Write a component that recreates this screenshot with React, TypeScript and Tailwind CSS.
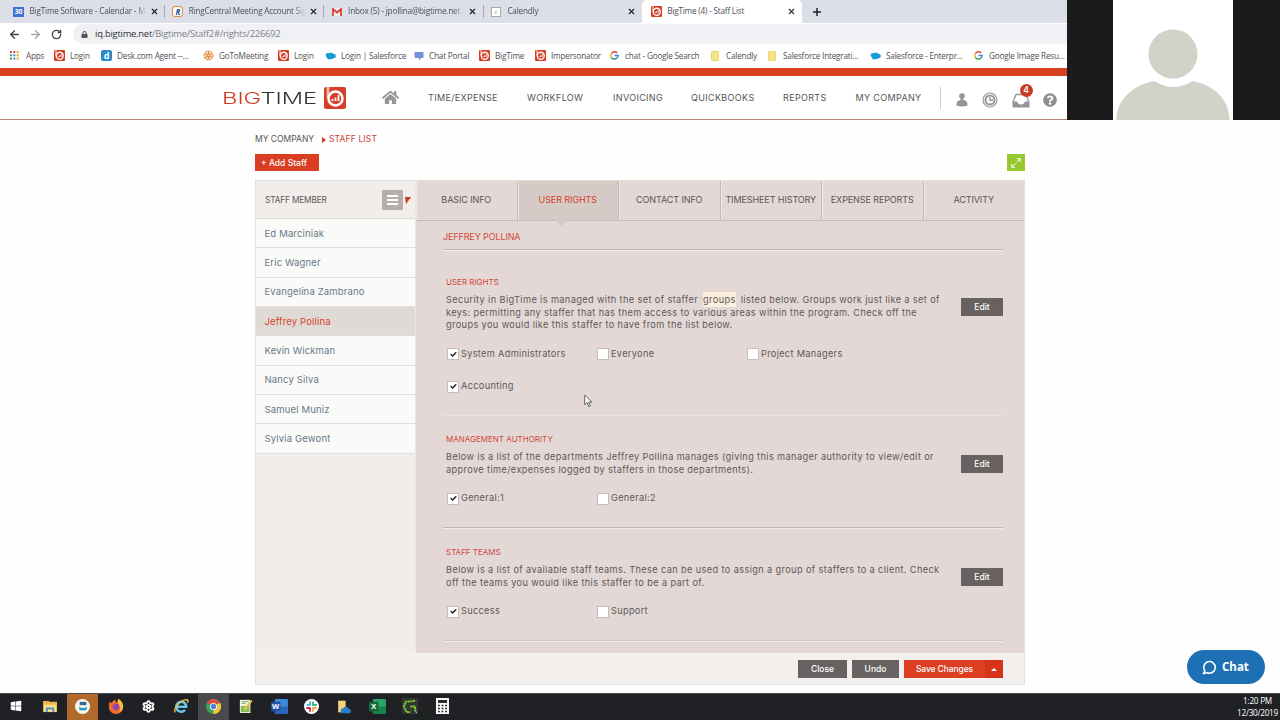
import type { ReactNode } from "react";
import { FaHome, FaQuestionCircle, FaLock, FaWindows } from "react-icons/fa";
import { ArrowLeft, ArrowRight, RotateCw, X, Plus, Settings, Check } from "lucide-react";

const BigTimeIcon = ({ className = "w-[11px] h-[11px]" }: { className?: string }) => (
  <svg viewBox="0 0 22 22" className={className}>
    <rect width="22" height="22" rx="2" fill="#d63f27" />
    <path d="M4 0v11" stroke="#f0b3a6" strokeWidth="3" />
    <circle cx="11.5" cy="11.5" r="7" fill="none" stroke="#fff" strokeWidth="2.6" />
    <path d="M8.5 14v-2M11.5 14V10.500M14.500 14V8" stroke="#fff" strokeWidth="1.8" />
  </svg>
);

const GoogleIcon = () => (
  <svg viewBox="0 0 20 20" className="w-[9px] h-[9px]" fill="none" strokeWidth="3.4">
    <path d="M16 4.500A8 8 0 0 0 3 6" stroke="#e2483b" />
    <path d="M3 6a8 8 0 0 0 0 8" stroke="#f0b81c" />
    <path d="M3 14a8 8 0 0 0 12 2" stroke="#36a455" />
    <path d="M10 10h8a8 8 0 0 1-3 6" stroke="#4583ee" />
  </svg>
);

const CloudIcon = () => (
  <svg viewBox="0 0 24 18" className="w-[11px] h-[8px]" fill="#169bd7">
    <circle cx="6" cy="7" r="5" />
    <circle cx="13" cy="6" r="5" />
    <circle cx="19" cy="9" r="5" />
    <circle cx="9" cy="12" r="5" />
    <circle cx="14" cy="11" r="5" />
  </svg>
);

const FolderIcon = () => <div className="h-[10px] w-[8px] rounded-[1px] border border-[#ecd671] bg-[#f8e48c]" />;

const CalendarIcon = () => (
  <div className="flex h-[10px] w-[11px] items-center justify-center bg-[#3f74d3] text-[7px] leading-none font-bold tracking-[-0.3px] text-white">
    30
  </div>
);

const RingIcon = () => (
  <div className="flex h-[11px] w-[11px] items-center justify-center rounded-[3px] border-[1.5px] border-[#e8882c] bg-white text-[8px] leading-none font-bold text-[#20508f] italic">
    R
  </div>
);

const GmailIcon = () => (
  <svg viewBox="0 0 20 16" className="h-[8px] w-[10px]">
    <rect width="20" height="16" fill="#f3eeee" />
    <path d="M2 16V2l8 7 8-7v14" fill="none" stroke="#d5392f" strokeWidth="3.400" />
  </svg>
);

const CalendlyIcon = () => (
  <div className="flex h-[10px] w-[10px] items-center justify-center border border-[#a9a9a9] bg-white text-[6px] leading-none text-[#777]">
    c
  </div>
);

const DeskIcon = () => (
  <div className="flex h-[11px] w-[11px] items-center justify-center rounded-[2px] bg-[#2b8ac9] text-[9px] leading-none font-bold text-white">
    d
  </div>
);

const GoToIcon = () => (
  <svg viewBox="0 0 22 22" className="h-[11px] w-[11px]" stroke="#dd7f2b" strokeWidth="2">
    <circle cx="11" cy="11" r="9" fill="#f6d3ad" strokeDasharray="5 1.500" />
    <path d="M11 4v14M5 7.500l12 7M17 7.500l-12 7" />
    <circle cx="11" cy="11" r="2" fill="#fff" />
  </svg>
);

const ChatPortalIcon = () => (
  <svg viewBox="0 0 20 20" className="h-[10px] w-[10px]" fill="#7191dc">
    <path d="M3 2h14q2 0 2 2v8q0 2-2 2h-3l-4 5v-5H3q-2 0-2-2V4q0-2 2-2z" />
  </svg>
);

const AppsIcon = () => (
  <svg viewBox="0 0 9 9" className="h-[9px] w-[9px]">
    {["#d9483b", "#d9483b", "#e0a437", "#4a9c5b", "#4d7dd1", "#e0a437", "#4a9c5b", "#4d7dd1", "#e0a437"].map((c, i) => (
      <rect key={i} x={(i % 3) * 3.3} y={Math.floor(i / 3) * 3.3} width="2" height="2" fill={c} />
    ))}
  </svg>
);

const browserTabs = [
  { title: "BigTime Software - Calendar - M", icon: <CalendarIcon /> },
  { title: "RingCentral Meeting Account Sig", icon: <RingIcon /> },
  { title: "Inbox (5) - jpollina@bigtime.net", icon: <GmailIcon /> },
  { title: "Calendly", icon: <CalendlyIcon /> },
];

// each width runs up to the next bookmark's icon
const bookmarks: { label: string; icon: ReactNode; width: string; text: string }[] = [
  { label: "Apps", icon: <AppsIcon />, width: "w-[44px]", text: "pl-[7px]" },
  { label: "Login", icon: <BigTimeIcon />, width: "w-[47px]", text: "pl-[5px]" },
  { label: "Desk.com Agent --...", icon: <DeskIcon />, width: "w-[102px]", text: "pl-[5px]" },
  { label: "GoToMeeting", icon: <GoToIcon />, width: "w-[75px]", text: "pl-[5px]" },
  { label: "Login", icon: <BigTimeIcon />, width: "w-[47px]", text: "pl-[5px]" },
  { label: "Login | Salesforce", icon: <CloudIcon />, width: "w-[89px]", text: "pl-[5px]" },
  { label: "Chat Portal", icon: <ChatPortalIcon />, width: "w-[65px]", text: "pl-[5px]" },
  { label: "BigTime", icon: <BigTimeIcon />, width: "w-[56px]", text: "pl-[5px]" },
  { label: "Impersonator", icon: <BigTimeIcon />, width: "w-[75px]", text: "pl-[5px]" },
  { label: "chat - Google Search", icon: <GoogleIcon />, width: "w-[101px]", text: "pl-[6px]" },
  { label: "Calendly", icon: <FolderIcon />, width: "w-[57px]", text: "pl-[7px]" },
  { label: "Salesforce Integrati...", icon: <FolderIcon />, width: "w-[102px]", text: "pl-[7px]" },
  { label: "Salesforce - Enterpr...", icon: <CloudIcon />, width: "w-[104px]", text: "pl-[5px]" },
  { label: "Google Image Resu...", icon: <GoogleIcon />, width: "w-[92px]", text: "pl-[6px]" },
];

const navItems = [
  { label: "TIME/EXPENSE", width: "w-[99px]" },
  { label: "WORKFLOW", width: "w-[86px]" },
  { label: "INVOICING", width: "w-[78px]" },
  { label: "QUICKBOOKS", width: "w-[92px]" },
  { label: "REPORTS", width: "w-[72.500px]" },
  { label: "MY COMPANY", width: "w-[84px]" },
];

const staff = [
  "Ed Marciniak",
  "Eric Wagner",
  "Evangelina Zambrano",
  "Jeffrey Pollina",
  "Kevin Wickman",
  "Nancy Silva",
  "Samuel Muniz",
  "Sylvia Gewont",
];

const panelTabs = ["BASIC INFO", "USER RIGHTS", "CONTACT INFO", "TIMESHEET HISTORY", "EXPENSE REPORTS", "ACTIVITY"];

const BrowserChrome = () => (
  <div className="font-['Open_Sans','Noto_Sans',sans-serif] text-[8.200px] tracking-[-0.2px] text-[#4d5056]">
    <div className="flex h-[23px] items-center bg-[#dcdfe8] pl-[6px]">
      {browserTabs.map((tab, i) => (
        <div key={tab.title} className="flex h-full w-[159.300px] items-center pl-[7px]">
          <div className="flex w-[16.500px] items-center">{tab.icon}</div>
          <div className="w-[117px] whitespace-nowrap [mask-image:linear-gradient(to_right,black_90%,transparent)]">
            {tab.title}
          </div>
          <X className="ml-[3px] h-[9px] w-[9px] text-[#222]" strokeWidth={3} />
          {i < 3 && <div className="ml-[5.500px] h-[13px] w-px bg-[#a4a7ae]" />}
        </div>
      ))}
      <div className="-ml-px flex h-full w-[160px] items-center rounded-t-[5px] bg-white pl-[9px]">
        <BigTimeIcon />
        <div className="w-[120px] pl-[5px]">BigTime (4) - Staff List</div>
        <X className="ml-[5px] h-[9px] w-[9px] text-[#333]" strokeWidth={3} />
      </div>
      <Plus className="ml-[9px] h-[12px] w-[12px] text-[#222]" strokeWidth={3} />
    </div>
    <div className="flex h-[21px] items-center bg-white pt-px pl-[8px]">
      <ArrowLeft className="h-[13px] w-[13px] text-[#444]" strokeWidth={2.5} />
      <ArrowRight className="ml-[8px] h-[13px] w-[13px] text-[#a5a5a5]" strokeWidth={2.5} />
      <RotateCw className="ml-[9px] h-[11px] w-[11px] text-[#444]" strokeWidth={3} />
      <div className="ml-[11px] flex h-[20px] flex-1 items-center rounded-l-[10px] bg-[#f0f1f4] pl-[8px]">
        <FaLock className="h-[7px] w-[7px] text-[#555]" />
        <div className="pl-[7px] text-[9.400px] tracking-[-0.23px] whitespace-nowrap text-[#7e8187]">
          <span className="text-[#333]">iq.bigtime.net</span>/Bigtime/Staff2#/rights/226692
        </div>
      </div>
    </div>
    <div className="flex h-[24px] items-center overflow-hidden bg-white pl-[10px]">
      {bookmarks.map((b, i) => (
        <div key={i} className={`flex shrink-0 items-center whitespace-nowrap ${b.width}`}>
          <div className="shrink-0">{b.icon}</div>
          <div className={b.text}>{b.label}</div>
        </div>
      ))}
    </div>
  </div>
);

const NavBar = () => (
  <div className="flex h-[52px] items-center border-t-8 border-b border-t-[#d83d22] border-b-[#b98375] bg-white pl-[222px]">
    <div className="w-[102px] pt-px text-[#333]">
      <div className="w-[68px] origin-left scale-x-[1.48] text-[16px] leading-none font-light whitespace-nowrap">
        <span className="text-[#d13b22]">BIG</span>TIME
      </div>
    </div>
    <BigTimeIcon className="h-[22px] w-[22px]" />
    <FaHome className="ml-[36px] h-[17px] w-[17px] text-[#969696]" />
    <div className="ml-[29px] flex pt-px text-[9px] tracking-[0.35px] whitespace-nowrap text-[#555]">
      {navItems.map((item) => (
        <div key={item.label} className={item.width}>
          {item.label}
        </div>
      ))}
    </div>
    <div className="h-[22px] w-px bg-[#ccc]" />
    <svg viewBox="0 0 12 14" className="mt-[5px] ml-[15px] h-[14px] w-[12px]" fill="#969696">
      <circle cx="6" cy="3" r="2.800" />
      <path d="M4.500 5h3v2C11 7.500 11.500 9.500 11.500 12.500q-5.500 1.800-11 0C.5 9.500 1 7.500 4.500 7z" />
    </svg>
    <svg viewBox="0 0 16 16" className="mt-[4px] ml-[14px] h-[16px] w-[16px]" fill="none" stroke="#969696">
      <circle cx="8" cy="8" r="7" strokeWidth="1.200" />
      <circle cx="8" cy="8" r="4.500" strokeWidth="2" />
      <path d="M8 5v3.300h3" strokeWidth="1.400" />
    </svg>
    <div className="relative mt-[5px] ml-[14px]">
      <svg viewBox="0 0 18 15" className="h-[15px] w-[18px]" fill="none" stroke="#969696">
        <path d="M1 9 4 1.500h10L17 9" strokeWidth="1.300" />
        <path d="M.5 8.500h4.500q1 3 4 3t4-3h4.500v6h-17z" fill="#969696" stroke="none" />
      </svg>
      <div className="absolute -top-[9px] left-[8px] flex h-[13px] w-[13px] items-center justify-center rounded-full bg-[#cb3a26] text-[8.500px] font-semibold text-white">
        4
      </div>
    </div>
    <FaQuestionCircle className="mt-[4px] ml-[13px] h-[14px] w-[14px] text-[#8e8e8e]" />
  </div>
);

const CallerPanel = () => (
  <div className="h-[120px] w-[213px] bg-[#1b1b1b] pl-[46px]">
    <svg viewBox="0 0 120 120" className="h-[120px] w-[120px] bg-white" fill="#d1d2c8">
      <circle cx="60" cy="54" r="24.500" />
      <path d="M3.500 120c0-21 17-35 38-39q19 12 38 0c21 4 37 18 37 39z" />
    </svg>
  </div>
);

const StaffSidebar = () => (
  <div className="w-[160px] border-r border-[#ece6e4] bg-[#f0edeb]">
    <div className="flex h-[38px] items-center border-b border-[#dedbd8] pl-[9px]">
      <div className="w-[117px] pt-px text-[8.300px] tracking-[-0.15px] text-[#5a5a5a]">STAFF MEMBER</div>
      <div className="flex h-[20px] w-[21px] flex-col items-center justify-center gap-[2px] bg-[#b5aeab]">
        <div className="h-[2px] w-[11px] bg-white" />
        <div className="h-[2px] w-[11px] bg-white" />
        <div className="h-[2px] w-[11px] bg-white" />
      </div>
      <svg viewBox="0 0 6 7" className="mt-[2px] ml-[2px] h-[7px] w-[6px]">
        <path d="M0 0h6L1 7z" fill="#cf3620" />
      </svg>
    </div>
    {staff.map((name) => (
      <div
        key={name}
        className={`flex h-[29.350px] items-center border-b border-[#dfdfdd] pt-px pl-[8.500px] text-[9.500px] tracking-[0.150px] ${
          name === "Jeffrey Pollina" ? "bg-[#e0dad6] text-[#d8432d]" : "bg-[#fafaf9] text-[#687988]"
        }`}
      >
        {name}
      </div>
    ))}
  </div>
);

const CheckItem = ({ label, checked = false }: { label: string; checked?: boolean }) => (
  <div className="flex h-[13px] w-[150px] items-center pl-px">
    <div className="mt-[2px] flex h-[12px] w-[12px] items-center justify-center border border-[#c6bcba] bg-white">
      {checked && <Check className="h-[7px] w-[7px] text-[#222]" strokeWidth={5} />}
    </div>
    <div className="pt-px pl-[2px] text-[9.200px] tracking-[0.320px] text-[#5f5957]">{label}</div>
  </div>
);

interface SectionProps {
  title: string;
  lines: ReactNode[];
  className: string;
  children: ReactNode;
}

const Section = ({ title, lines, className, children }: SectionProps) => (
  <div className={`border-b pl-[3px] ${className}`}>
    <div className="h-[12px] text-[8px] leading-[12px] text-[#d24936]">{title}</div>
    <div className="flex justify-between">
      <div className="pt-[6px] text-[9.200px] leading-[12.600px] tracking-[0.380px] whitespace-nowrap text-[#5f5957]">
        {lines.map((line, i) => (
          <div key={i}>{line}</div>
        ))}
      </div>
      <button className="mt-[10px] h-[18px] w-[42px] bg-[#676261] text-[8.500px] font-medium text-white">Edit</button>
    </div>
    {children}
  </div>
);

const UserRights = () => (
  <div className="h-[432px] px-[27px] pr-[21px]">
    <div className="h-[29px] border-b border-[#c3b6b4] pt-[9px] text-[9px] leading-[13px] tracking-[-0.120px] text-[#d24936] shadow-[0_1px_0_#f3ebe9]">
      JEFFREY POLLINA
    </div>
    <Section
      title="USER RIGHTS"
      className="h-[166px] border-b-[#ede0de] pt-[26px]"
      lines={[
        <>
          Security in BigTime is managed with the set of staffer{" "}
          <span className="mx-[1.500px] bg-[#fbeedd] px-[0.500px] py-[2px]">groups</span> listed below. Groups work just like a set of
        </>,
        "keys: permitting any staffer that has them access to various areas within the program. Check off the",
        "groups you would like this staffer to have from the list below.",
      ]}
    >
      <div className="flex flex-wrap gap-y-[19.500px] pt-[15px]">
        <CheckItem label="System Administrators" checked />
        <CheckItem label="Everyone" />
        <CheckItem label="Project Managers" />
        <CheckItem label="Accounting" checked />
      </div>
    </Section>
    <Section
      title="MANAGEMENT AUTHORITY"
      className="h-[112px] border-b-[#c3b6b4] pt-[17px] shadow-[0_1px_0_#f3ebe9]"
      lines={[
        "Below is a list of the departments Jeffrey Pollina manages (giving this manager authority to view/edit or",
        "approve time/expenses logged by staffers in those departments).",
      ]}
    >
      <div className="flex pt-[15px]">
        <CheckItem label="General:1" checked />
        <CheckItem label="General:2" />
      </div>
    </Section>
    <Section
      title="STAFF TEAMS"
      className="h-[113px] border-b-[#d5c6c3] pt-[18px] shadow-[0_1px_0_#f3ebe9]"
      lines={[
        "Below is a list of available staff teams. These can be used to assign a group of staffers to a client. Check",
        "off the teams you would like this staffer to be a part of.",
      ]}
    >
      <div className="flex pt-[15px]">
        <CheckItem label="Success" checked />
        <CheckItem label="Support" />
      </div>
    </Section>
  </div>
);

const StaffPanel = () => (
  <div className="mt-[9px] h-[505px] w-[770px] border border-[#e2dfdd] bg-[#f2efec]">
    <div className="flex h-[472px]">
      <StaffSidebar />
      <div className="flex-1 bg-[#e3d8d6]">
        <div className="flex h-[40px] border-b border-[#c4b8b6] text-[9px] tracking-[-0.100px] whitespace-nowrap">
          {panelTabs.map((tab) => (
            <div
              key={tab}
              className={`flex flex-1 items-center justify-center border-r border-[#c6bbb9] pb-px shadow-[inset_1px_0_0_#efe7e5] last:border-r-0 ${
                tab === "USER RIGHTS" ? "relative bg-[#d6cac6] text-[#d5402b]" : "text-[#5c5655]"
              }`}
            >
              {tab}
              {tab === "USER RIGHTS" && (
                <svg viewBox="0 0 12 6" className="absolute -bottom-[6px] left-[37px] h-[6px] w-[12px]">
                  <path d="M0 0h12L6 6z" fill="#d6cac6" />
                </svg>
              )}
            </div>
          ))}
        </div>
        <UserRights />
      </div>
    </div>
    <div className="flex items-center justify-end gap-[5px] pt-[7px] pr-[21px] text-[8.500px] font-medium text-white">
      <button className="h-[18px] w-[49px] bg-[#676261]">Close</button>
      <button className="h-[18px] w-[47px] bg-[#676261]">Undo</button>
      <button className="flex h-[18px] w-[99px] items-center bg-[#dc3e22] tracking-[-0.100px]">
        <span className="w-[81px]">Save Changes</span>
        <span className="flex h-full flex-1 items-center justify-center bg-[#d83318]">
          <svg viewBox="0 0 6 3" className="h-[3px] w-[6px]">
            <path d="M0 3 3 0l3 3z" fill="#fff" />
          </svg>
        </span>
      </button>
    </div>
  </div>
);

const ExplorerIcon = () => (
  <svg viewBox="0 0 16 14" className="h-[13px] w-[15px]">
    <path d="M0 1h6l1 1h8v11H0z" fill="#e5b84c" />
    <path d="M1 5h13v8H1z" fill="#fbdc80" />
    <path d="M3 13V8h9v5h-2v-3H5v3z" fill="#4494cf" />
  </svg>
);

const ChromeIcon = () => (
  <svg viewBox="0 0 20 20" className="h-[15px] w-[15px]">
    <circle cx="10" cy="10" r="10" fill="#3ea455" />
    <path d="M10 10 1.300 5A10 10 0 0 1 18.700 5z" fill="#df4b3d" />
    <path d="M10 10 18.700 5A10 10 0 0 1 10 20z" fill="#f3c63a" />
    <circle cx="10" cy="10" r="4.700" fill="#fff" />
    <circle cx="10" cy="10" r="3.600" fill="#4480e4" />
  </svg>
);

const IeIcon = () => (
  <svg viewBox="0 0 20 20" className="h-[16px] w-[16px]" fill="none">
    <path d="M5 11h11.500a6.200 6.200 0 1 0-1.500 4" stroke="#69c7ee" strokeWidth="3.200" />
    <path d="M3 18C-1 15 8 3 17 2q3 0 1 4" stroke="#e9c347" strokeWidth="1.800" />
  </svg>
);

const OfficeIcon = ({ letter, dark, light }: { letter: string; dark: string; light: string }) => (
  <svg viewBox="0 0 18 16" className="h-[15px] w-[17px]">
    <rect x="4" width="14" height="16" rx="1" fill={light} />
    <path d="M4 8h14v8H4z" fill={dark} opacity=".6" />
    <rect y="3" width="10" height="10" rx="1" fill={dark} />
    <text x="5" y="11" textAnchor="middle" fontSize="8" fontWeight="700" fill="#fff">
      {letter}
    </text>
  </svg>
);

const NotepadIcon = () => (
  <svg viewBox="0 0 16 18" className="h-[16px] w-[14px]">
    <path d="M1 2h12v15H1z" fill="#f0f5e4" />
    <path d="M2 9h10v7H2z" fill="#85bd54" />
    <path d="m5 12 9-10 1.500 1.500L7 14z" fill="#e9bc4a" />
    <path d="M3 4h8M3 6h5" stroke="#78a45a" />
  </svg>
);

const SlackBadge = () => (
  <svg viewBox="0 0 20 20" className="h-[15px] w-[15px]" strokeWidth="2.500" strokeLinecap="round">
    <circle cx="10" cy="10" r="10" fill="#fff" />
    <path d="M8 4v4M4.500 8H8" stroke="#45bfe8" />
    <path d="M12 4.500V8M12 8h4" stroke="#38b37e" />
    <path d="M4 12h4M8 12v4" stroke="#dc2b60" />
    <path d="M12 12v4M12 12h4" stroke="#e8b33a" />
  </svg>
);

const FirefoxIcon = () => (
  <svg viewBox="0 0 20 20" className="h-[16px] w-[16px]">
    <path d="M2 5q1 1 3 1 1-3 4-4 0 3 3 4 0-3 1-5 6 4 6 10A9 9 0 0 1 1 11q0-4 1-6z" fill="#f36a31" />
    <path d="M13 1q6 4 6 10a9 9 0 0 1-5 7q3-7-2-12 0-3 1-5z" fill="#fbbf38" />
    <circle cx="10" cy="11" r="4" fill="#8a45bd" />
    <path d="M4 8q4-1 6 1-4 0-4 3z" fill="#f0505a" />
  </svg>
);

const OneDriveFolder = () => (
  <svg viewBox="0 0 18 18" className="h-[15px] w-[16px]">
    <path d="M2 2h9v14H2z" fill="#f4d37c" />
    <path d="M8 17a3 3 0 0 1 0-6 4 4 0 0 1 7 1 2.500 2.500 0 0 1 0 5z" fill="#2580cf" />
  </svg>
);

const CamtasiaIcon = () => (
  <div className="flex h-[15px] w-[15px] items-center justify-center rounded-full bg-[#f6f5ee]">
    <svg viewBox="0 0 12 12" className="h-[10px] w-[10px]">
      <path d="M2 1h8v4H2z" fill="#366d8a" />
      <path d="M1 7q5 3 10 0l-1 4H2z" fill="#2695bd" />
    </svg>
  </div>
);

const SnakeIcon = () => (
  <div className="flex h-[16px] w-[16px] items-center justify-center bg-[#333631]">
    <svg viewBox="0 0 16 16" className="h-[15px] w-[15px]" fill="none" stroke="#7bd732" strokeWidth="2" strokeDasharray="2.200 .6">
      <path d="M14 2 4 3 2 8l3 6h4M9 8h5v4l2 3" />
    </svg>
  </div>
);

const CalculatorIcon = () => (
  <svg viewBox="0 0 13 16" className="h-[16px] w-[13px]">
    <rect width="13" height="16" fill="#f7f7f7" />
    <path d="M2 2h9v3H2z" fill="#292929" />
    <path d="M2 7.500h9M2 10.500h9M2 13.500h9" stroke="#292929" strokeWidth="1.700" strokeDasharray="1.800 1.800" />
  </svg>
);

const taskbarItems: { icon: ReactNode; className: string }[] = [
  { icon: <FaWindows className="mr-[3px] h-[12px] w-[12px] text-white" />, className: "w-[29px]" },
  { icon: <ExplorerIcon />, className: "w-[29px] border-b-[#6da4d8]" },
  { icon: <CamtasiaIcon />, className: "-mx-px w-[31px] border-b-[#f07c1c] bg-[#b1692e]" },
  { icon: <FirefoxIcon />, className: "w-[29px]" },
  { icon: <Settings className="h-[13px] w-[13px] text-white" strokeWidth={3.5} />, className: "w-[29px]" },
  { icon: <IeIcon />, className: "w-[29px] border-b-[#6da4d8]" },
  { icon: <ChromeIcon />, className: "-mx-px w-[31px] border-b-[#6da4d8] bg-[#4a4a4c]" },
  { icon: <NotepadIcon />, className: "w-[29px] border-b-[#6da4d8]" },
  { icon: <OfficeIcon letter="W" dark="#2052a8" light="#3d8adc" />, className: "w-[29px] border-b-[#6da4d8]" },
  { icon: <SlackBadge />, className: "w-[29px] border-b-[#6da4d8]" },
  { icon: <OneDriveFolder />, className: "w-[29px] border-b-[#6da4d8]" },
  { icon: <OfficeIcon letter="X" dark="#136c3c" light="#2ca568" />, className: "w-[29px] border-b-[#6da4d8]" },
  { icon: <SnakeIcon />, className: "w-[29px] border-b-[#6da4d8]" },
  { icon: <CalculatorIcon />, className: "w-[29px] border-b-[#6da4d8]" },
];

const Taskbar = () => (
  <div className="flex h-[27px] justify-between border-t border-[#4a4a4a] bg-[#202124] font-['Open_Sans',sans-serif]">
    <div className="flex gap-[3.700px] pl-[3px]">
      {taskbarItems.map((item, i) => (
        <div key={i} className={`flex items-center justify-center border-b-2 border-b-transparent ${item.className}`}>
          {item.icon}
        </div>
      ))}
    </div>
    <div className="pt-px pr-[2px] text-center text-[8.200px] leading-[12px] tracking-[-0.25px] text-white">
      <div>1:20 PM</div>
      <div>12/30/2019</div>
    </div>
  </div>
);

export default function App() {
  return (
    <div className="flex h-[720px] w-[1280px] flex-col overflow-hidden bg-[#fefefe] font-['Inter',sans-serif]">
      <div className="flex h-[120px]">
        <div className="w-[1067px]">
          <BrowserChrome />
          <NavBar />
        </div>
        <CallerPanel />
      </div>
      <div className="relative h-[573px] pl-[255px]">
        <div className="flex h-[34px] items-center pt-[5px] text-[8.500px] text-[#555]">
          <div className="w-[67px]">MY COMPANY</div>
          <svg viewBox="0 0 4 6" className="h-[6px] w-[4px]">
            <path d="M0 0l4 3-4 3z" fill="#cb3a26" />
          </svg>
          <div className="pl-[3px] tracking-[0.150px] text-[#c94332]">STAFF LIST</div>
        </div>
        <div className="flex w-[770px] justify-between">
          <button className="h-[17px] w-[64px] bg-[#d93d22] pr-[6px] text-[8.500px] leading-[18px] font-medium text-white">
            + Add Staff
          </button>
          <button className="flex h-[17px] w-[18px] items-center justify-center bg-[#96c832]">
            <svg viewBox="0 0 10 10" className="h-[10px] w-[10px]" fill="none" stroke="#fff">
              <path d="M5.500 4.500 9 1M6 .7h3.300V4M4.500 5.500 1 9M.7 6v3.300H4" />
            </svg>
          </button>
        </div>
        <StaffPanel />
        <svg viewBox="0 0 12 18" className="absolute top-[274px] left-[584px] h-[14px] w-[9px]">
          <path d="M1 1v13l3-3 2.500 5.500 2-1L6 10.500h4.500z" fill="#fff" stroke="#333" />
        </svg>
        <button className="absolute top-[530px] left-[1187px] flex h-[34px] w-[78px] items-center rounded-full bg-[#1d70b4] pl-[15px] font-['Open_Sans',sans-serif] text-[11.500px] font-bold text-white">
          <svg viewBox="0 0 16 16" className="mr-[5px] h-[15px] w-[15px]" fill="none" stroke="#fff" strokeWidth="1.700">
            <path d="M1.500 14.500 3 11.500A6.200 6.200 0 1 1 5.500 13.500z" strokeLinejoin="round" />
          </svg>
          Chat
        </button>
      </div>
      <Taskbar />
    </div>
  );
}
